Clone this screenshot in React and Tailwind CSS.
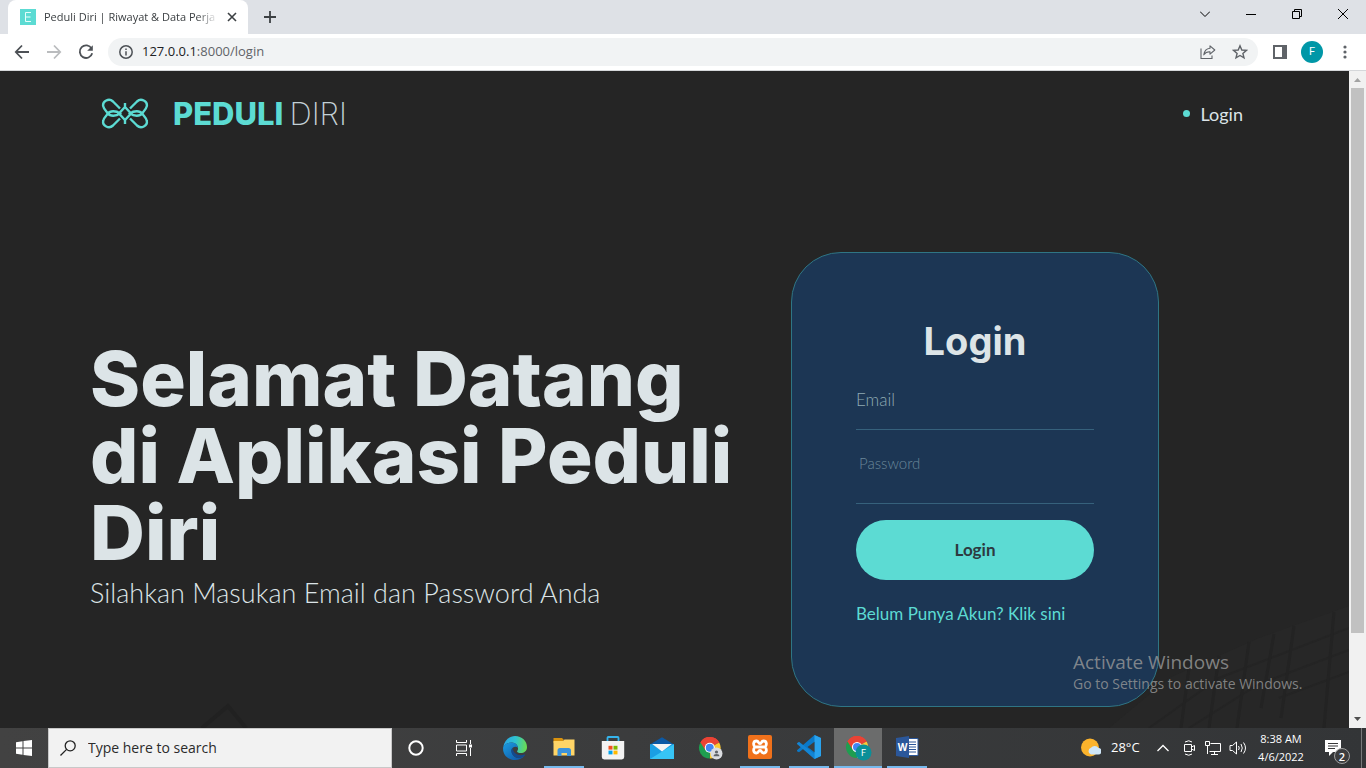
const RUNNING = 'mx-1 h-[2px] bg-[#76b9ed]'
const ACTIVE = 'h-[2px] bg-[#76b9ed]'

const CHROME_SLICES = (
  <>
    <path d="M12 12 L1.6 6 A12 12 0 0 1 22.4 6 Z" fill="#ea4335" />
    <path d="M12 12 L22.4 6 A12 12 0 0 1 12 24 Z" fill="#fbc934" />
    <path d="M12 12 L12 24 A12 12 0 0 1 1.6 6 Z" fill="#1e9e50" />
    <path d="M12 6.5 H22.7 A12 12 0 0 0 1.6 6 L7.2 14.8 Z" fill="#ea4335" />
    <circle cx="12" cy="12" r="5.6" fill="#fff" />
    <circle cx="12" cy="12" r="4.4" fill="#4285f4" />
  </>
)

function EdgeIcon() {
  return (
    <svg viewBox="0 0 24 24" className="size-6">
      <defs>
        <linearGradient id="edgeTop" x1="0" y1="0.4" x2="1" y2="0.5">
          <stop offset="0" stopColor="#2aa5e6" />
          <stop offset="0.5" stopColor="#2fc3d0" />
          <stop offset="1" stopColor="#6bdc4e" />
        </linearGradient>
        <linearGradient id="edgeLow" x1="0" y1="0" x2="1" y2="1">
          <stop offset="0" stopColor="#1b9de2" />
          <stop offset="1" stopColor="#0f4f9e" />
        </linearGradient>
      </defs>
      <path d="M.2 11 C1.5 4 6.5 0 12 0 C19 0 24 5 24 11 C24 15 21 17 17.8 17 C15 17 13.6 16 14.2 15 C16.2 12.8 14.8 7 8.8 6.6 C4.5 6.5 1.2 8.5 .2 11 Z" fill="url(#edgeTop)" />
      <path d="M.2 11 C1.4 8 4.6 6.6 8.8 6.6 C12.4 6.8 14.8 9.2 14.9 11.7 C13.8 10.6 11.8 10.2 10 11.4 C7.4 13.6 8.4 18.6 12 21 C15 22.7 18.8 21.8 22 19.2 C19.8 22.4 16 24 12 24 C4 24 -.8 17.5 .2 11 Z" fill="url(#edgeLow)" />
      <path d="M9.5 11.8 C7 14.5 8.6 19 12 21 C15 22.7 18.8 21.8 22 19.2 C22.4 18.6 22 18.2 21.4 18.5 C16 20.6 10 17.8 9.5 11.8 Z" fill="#134a8e" />
    </svg>
  )
}

function ExplorerIcon() {
  return (
    <svg viewBox="0 0 24 24" className="size-6">
      <path d="M1.5 3 H10 L11.5 4.5 V8 H1.5 Z" fill="#d9920e" />
      <path d="M1.5 6 H11 L12.5 4.6 H22.5 V20.5 H1.5 Z" fill="#ffd567" />
      <path d="M5.5 21 V15.5 Q5.5 13 8 13 H16.5 Q19 13 19 15.5 V21 H15 V18 H9.5 V21 Z" fill="#3c93db" />
    </svg>
  )
}

function StoreIcon() {
  return (
    <svg viewBox="0 0 24 24" className="size-6">
      <path d="M6.5 6 V1.8 Q6.5 1 7.3 1 H16.7 Q17.5 1 17.5 1.8 V6" fill="none" stroke="#35b4ec" strokeWidth="1.8" />
      <path d="M.8 5 H23.2 V21 Q23.2 23.4 20.8 23.4 H3.2 Q.8 23.4 .8 21 Z" fill="#f3f3f3" />
      <path d="M7.5 9.8 H11.5 V13.6 H7.5 Z" fill="#f25022" />
      <path d="M12.5 9.8 H16.5 V13.6 H12.5 Z" fill="#7fba00" />
      <path d="M7.5 14.6 H11.5 V18.4 H7.5 Z" fill="#00a4ef" />
      <path d="M12.5 14.6 H16.5 V18.4 H12.5 Z" fill="#ffb900" />
    </svg>
  )
}

function MailIcon() {
  return (
    <svg viewBox="0 0 24 24" className="size-6">
      <path d="M0 8.5 L12 1.2 L24 8.5 V10 H0 Z" fill="#0c59a4" />
      <path d="M0 8.2 V23 H24 V8.2 Z" fill="#1a9fe4" />
      <path d="M24 8.2 L0 23 H24 Z" fill="#37c4f5" />
      <path d="M2.2 8 H21.8 L12 15.5 Z" fill="#f4f4f4" />
    </svg>
  )
}

function ChromeGuestIcon() {
  return (
    <svg viewBox="0 0 26 26" className="size-[26px]">
      <g transform="translate(1 2) scale(.9)">{CHROME_SLICES}</g>
      <circle cx="18.5" cy="18.5" r="6" fill="#dadce0" />
      <circle cx="18.5" cy="17" r="1.6" fill="#5f6368" />
      <path d="M15.6 21.3 Q15.6 19 18.5 19 Q21.4 19 21.4 21.3 Z" fill="#5f6368" />
    </svg>
  )
}

function ChromeProfileIcon() {
  return (
    <svg viewBox="0 0 28 28" className="size-7">
      <g transform="translate(2 3) scale(.92)">{CHROME_SLICES}</g>
      <circle cx="19.5" cy="19.5" r="8" fill="#0b8f98" />
      <text x="19.5" y="23" textAnchor="middle" fontSize="9" fontFamily="Roboto" fill="#fff">F</text>
    </svg>
  )
}

function XamppIcon() {
  return (
    <svg viewBox="0 0 24 24" className="size-6">
      <rect width="24" height="24" rx="2" fill="#f0711b" />
      <path
        d="M8.5 6 C5 6 5 10 7 12 C5 14 5 18 8.5 18 C11 18 10 15.5 12 15.5 C14 15.5 13 18 15.5 18 C19 18 19 14 17 12 C19 10 19 6 15.5 6 C13 6 14 8.5 12 8.5 C10 8.5 11 6 8.5 6 Z M8 12 H16"
        fill="none"
        stroke="#fff"
        strokeWidth="2.8"
        strokeLinejoin="round"
      />
    </svg>
  )
}

function CodeIcon() {
  return (
    <svg viewBox="0 0 24 24" className="size-6">
      <path d="M17.5 0 L24 3 V21 L17.5 24 L6.5 13.8 L2 17.3 L0 16.2 V15.2 L17.5 0 Z" fill="#0a79c9" />
      <path d="M0 8.2 L2 6.8 L17.5 19 V24 L0 9 Z" fill="#1385d4" />
      <path d="M17.5 0 L24 3 V21 L17.5 24 V18 V6 Z" fill="#29a3ee" />
      <path d="M17.5 6.8 L10.5 12 L17.5 17.2 Z" fill="#3e3f40" />
    </svg>
  )
}

function WordIcon() {
  return (
    <svg viewBox="0 0 24 24" className="size-6">
      <path d="M12 3.5 H23 V20.5 H12 Z" fill="#fff" stroke="#2b579a" />
      <path d="M14 7 H21 M14 9.5 H21 M14 12 H21 M14 14.5 H21 M14 17 H21" stroke="#2b579a" />
      <path d="M1 3 L14 1 V23 L1 21 Z" fill="#2b579a" />
      <text x="7.5" y="16" textAnchor="middle" fontSize="10" fontWeight="700" fontFamily="Open Sans" fill="#fff">W</text>
    </svg>
  )
}

const PINNED_APPS = [
  { name: 'Microsoft Edge', icon: <EdgeIcon /> },
  { name: 'File Explorer', icon: <ExplorerIcon />, line: RUNNING },
  { name: 'Microsoft Store', icon: <StoreIcon /> },
  { name: 'Mail', icon: <MailIcon /> },
  { name: 'Chrome', icon: <ChromeGuestIcon /> },
  { name: 'XAMPP', icon: <XamppIcon />, line: RUNNING },
  { name: 'Visual Studio Code', icon: <CodeIcon />, line: RUNNING },
  { name: 'Chrome profile', icon: <ChromeProfileIcon />, line: ACTIVE, active: true },
  { name: 'Word', icon: <WordIcon />, line: RUNNING },
]

function TabStrip() {
  return (
    <div className="flex h-[34px] items-stretch bg-[#dee1e6] pl-2">
      <div className="flex w-60 items-center rounded-t-lg bg-white pr-2 pl-3">
        <svg viewBox="0 0 16 16" className="size-4 shrink-0">
          <rect width="16" height="16" fill="#5cdbd3" />
          <path d="M11 3.5 H5.5 V12.5 H11 M5.5 8 H10.5" fill="none" stroke="#e6fffb" />
        </svg>
        <span className="ml-2 flex-1 overflow-hidden text-[11px] whitespace-nowrap text-[#3c4043] [mask-image:linear-gradient(to_right,black_88%,transparent)]">
          Peduli Diri | Riwayat &amp; Data Perja
        </span>
        <button aria-label="Close tab" className="ml-1.5 grid size-4 place-items-center">
          <svg viewBox="0 0 10 10" className="size-2.5" stroke="#3c4043" strokeWidth="1.6">
            <path d="M1 1 L9 9 M9 1 L1 9" />
          </svg>
        </button>
      </div>
      <button aria-label="New tab" className="grid w-11 place-items-center">
        <svg viewBox="0 0 12 12" className="size-3" stroke="#3c4043" strokeWidth="1.8">
          <path d="M6 0 V12 M0 6 H12" />
        </svg>
      </button>
      <div className="ml-auto flex pb-1.5 text-black">
        <button aria-label="Search tabs" className="grid w-[46px] place-items-center">
          <svg viewBox="0 0 10 10" className="size-2.5" fill="none" stroke="currentColor">
            <path d="M0 2.5 L5 7.5 L10 2.5" />
          </svg>
        </button>
        <button aria-label="Minimize" className="grid w-[46px] place-items-center">
          <svg viewBox="0 0 10 10" className="size-2.5" stroke="currentColor">
            <path d="M0 5.5 H10" />
          </svg>
        </button>
        <button aria-label="Restore" className="grid w-[46px] place-items-center">
          <svg viewBox="0 0 10 10" className="size-2.5" fill="none" stroke="currentColor">
            <path d="M.5 2.5 H7.5 V9.5 H.5 Z M2.5 2.5 V.5 H9.5 V7.5 H7.5" />
          </svg>
        </button>
        <button aria-label="Close" className="grid w-[46px] place-items-center">
          <svg viewBox="0 0 10 10" className="size-2.5" stroke="currentColor">
            <path d="M0 0 L10 10 M10 0 L0 10" />
          </svg>
        </button>
      </div>
    </div>
  )
}

function Toolbar() {
  return (
    <div className="flex h-[37px] items-center border-b border-[#d5d7da] bg-white pr-[19px] pl-3.5 text-[#5f6368]">
      <button aria-label="Back" className="w-8">
        <svg viewBox="0 0 16 16" className="size-4" fill="none" stroke="#4d5156" strokeWidth="1.8">
          <path d="M15 8 H2 M8 1.5 L1.8 8 L8 14.5" />
        </svg>
      </button>
      <button aria-label="Forward" className="w-8">
        <svg viewBox="0 0 16 16" className="size-4" fill="none" stroke="#babcbe" strokeWidth="1.8">
          <path d="M1 8 H14 M8 1.5 L14.2 8 L8 14.5" />
        </svg>
      </button>
      <button aria-label="Reload" className="w-[30px]">
        <svg viewBox="0 0 16 16" className="size-4" fill="none" stroke="#4d5156" strokeWidth="1.8">
          <path d="M13.6 4.6 A6.3 6.3 0 1 0 14.2 9.3" />
          <path d="M14.8 1.2 V6.8 H9.2 Z" fill="#4d5156" stroke="none" />
        </svg>
      </button>
      <div className="flex h-7 flex-1 items-center rounded-full bg-[#f1f3f4] px-2.5">
        <svg viewBox="0 0 16 16" className="mr-2 size-4 shrink-0" fill="none" stroke="#4d5156" strokeWidth="1.5">
          <circle cx="8" cy="8" r="6.2" />
          <path d="M8 7.2 V11.4 M8 4.6 V6.1" />
        </svg>
        <span className="text-[13px] text-[#5f6368]">
          <span className="text-[#202124]">127.0.0.1</span>:8000/login
        </span>
        <button aria-label="Share" className="ml-auto">
          <svg viewBox="0 0 16 16" className="size-4" fill="none" stroke="currentColor" strokeWidth="1.1">
            <path d="M1 4.5 V14.5 H12 V11.5" />
            <path d="M10 1.8 L14.8 6 L10 10.2 V7.8 Q6 7.6 3.8 10.8 Q4.6 5 10 4.3 Z" strokeLinejoin="round" />
          </svg>
        </button>
        <button aria-label="Bookmark" className="ml-4">
          <svg viewBox="0 0 16 16" className="size-4" fill="none" stroke="currentColor" strokeWidth="1.4">
            <path d="M8 1.8 L9.8 6 L14.4 6.4 L10.9 9.4 L12 13.9 L8 11.5 L4 13.9 L5.1 9.4 L1.6 6.4 L6.2 6 Z" />
          </svg>
        </button>
      </div>
      <button aria-label="Side panel" className="ml-[15px]">
        <svg viewBox="0 0 14 14" className="size-3.5">
          <path d="M0 0 H14 V14 H0 Z M2 2 V12 H9 V2 Z" fill="currentColor" fillRule="evenodd" />
        </svg>
      </button>
      <button aria-label="Profile" className="ml-3.5 grid size-[22px] place-items-center rounded-full bg-[#0097a7] font-[Roboto] text-[11px] text-white">
        F
      </button>
      <button aria-label="Menu" className="ml-5">
        <svg viewBox="0 0 4 14" className="h-3.5 w-1" fill="currentColor">
          <circle cx="2" cy="2" r="1.6" />
          <circle cx="2" cy="7" r="1.6" />
          <circle cx="2" cy="12" r="1.6" />
        </svg>
      </button>
    </div>
  )
}

function BrandLogo() {
  return (
    <svg viewBox="0 0 48 32" className="h-8 w-12" fill="none" stroke="#5cdbd3" strokeWidth="2.4">
      <path d="M19 10.5 L12 3.5 C8 -.2 1.2 3 2.2 8.2 C2.6 11 5 13 7 15.5 M29 10.5 L36 3.5 C40 -.2 46.8 3 45.8 8.2 C45.4 11 43 13 41 15.5" />
      <path d="M19 20.5 L12 27.5 C8 31.2 1.2 28 2.2 22.8 C2.6 20 5 18 7 15.5 M29 20.5 L36 27.5 C40 31.2 46.8 28 45.8 22.8 C45.4 20 43 18 41 15.5" />
      <path d="M7 15.5 C9 12.5 15 12.5 19 15.5 C15 18.5 9 18.5 7 15.5 Z M41 15.5 C39 12.5 33 12.5 29 15.5 C33 18.5 39 18.5 41 15.5 Z" />
      <path d="M24 9 L30 15.5 L24 22 L18 15.5 Z M24 5 V10 M24 21 V26" />
    </svg>
  )
}

// Faint towers behind the hero
function Backdrop() {
  return (
    <>
      <svg viewBox="0 0 280 140" className="pointer-events-none absolute right-0 bottom-0 w-70" fill="none">
        <path d="M280 18 L190 50 L100 90 L40 140 H280 Z" fill="#272727" />
        <path d="M280 40 L150 90 L80 140 M280 62 L190 96 L120 140 M280 84 L210 110" stroke="#242424" strokeWidth="2" />
        <path d="M265 24 L255 140 M225 38 L212 130 M205 46 L192 120 M180 54 L168 140 M150 68 L140 140 M120 80 L112 140" stroke="#232323" strokeWidth="3" />
      </svg>
      <svg viewBox="0 0 56 26" className="pointer-events-none absolute bottom-0 left-[200px] w-14" fill="none">
        <path d="M2 26 L28 4 L46 26" stroke="#212121" strokeWidth="4" />
      </svg>
    </>
  )
}

function LoginCard() {
  return (
    <form className="flex w-[368px] shrink-0 flex-col rounded-[50px] border border-[#2f7584] bg-[#1c3654] px-16 pt-16 pb-20">
      <h2 className="mb-[5px] text-center font-[Inter,sans-serif] text-[38px] leading-12 font-bold text-[#dce4e7]">Login</h2>
      <input
        type="email"
        aria-label="Email"
        placeholder="Email"
        className="h-[60px] w-full border-b border-[#36617c] bg-transparent text-[17px] font-light outline-none placeholder:text-[#8fabb3]"
      />
      <input
        type="password"
        aria-label="Password"
        placeholder="Password"
        className="h-[74px] w-full border-b border-[#36617c] bg-transparent px-[3px] pb-2 text-[15px] font-light outline-none placeholder:text-[#6a8799]"
      />
      <button type="button" className="mt-4 h-[60px] rounded-full bg-[#5cdbd3] text-[17px] font-bold text-[#2d3a40]">
        Login
      </button>
      <a href="#register" className="mt-[22px] text-[17px] leading-6 whitespace-nowrap text-[#5cdbd3]">
        Belum Punya Akun? Klik sini
      </a>
    </form>
  )
}

function PageScrollbar() {
  return (
    <div className="flex w-[17px] shrink-0 flex-col items-center bg-[#f1f1f1]">
      <svg viewBox="0 0 17 17" className="size-[17px] shrink-0">
        <path d="M5 11 L8.5 7 L12 11 Z" fill="#a3a3a3" />
      </svg>
      <div className="w-[13px] flex-[7] bg-[#c1c1c1]" />
      <div className="flex-1" />
      <svg viewBox="0 0 17 17" className="size-[17px] shrink-0">
        <path d="M5 6 L8.5 10 L12 6 Z" fill="#505050" />
      </svg>
    </div>
  )
}

function Page() {
  return (
    <div className="relative flex flex-1">
      <div className="relative flex-1 overflow-hidden bg-[#252525] px-[90px] font-[Lato,sans-serif]">
        <Backdrop />
        <header className="relative flex h-[85px] items-center pr-4 pl-[11px]">
          <BrandLogo />
          <div className="ml-6 flex items-baseline gap-1.5 font-[Inter,sans-serif] text-[31px] leading-none">
            <span className="font-extrabold text-[#5cdbd3]">PEDULI</span>
            <span className="font-extralight text-[#c3d0d6]">DIRI</span>
          </div>
          <nav className="ml-auto flex items-center gap-[11px]">
            <span className="size-[7px] rounded-full bg-[#5cdbd3]" />
            <a href="#login" className="text-lg text-[#dce4e7]">Login</a>
          </nav>
        </header>
        <main className="relative flex items-center justify-between pt-24 pr-[100px]">
          <div className="w-[660px] pb-2 text-[#dce4e7]">
            <h1 className="font-[Inter,sans-serif] text-[76px] leading-[77px] font-extrabold">
              Selamat Datang di Aplikasi Peduli Diri
            </h1>
            <p className="mt-1 text-[27px] leading-9 font-light">Silahkan Masukan Email dan Password Anda</p>
          </div>
          <LoginCard />
        </main>
      </div>
      <PageScrollbar />
      <div className="pointer-events-none absolute right-[57px] bottom-[34px] w-[236px] whitespace-nowrap text-[#9a9a9a]/80">
        <p className="text-[19px] leading-6">Activate Windows</p>
        <p className="text-sm leading-5">Go to Settings to activate Windows.</p>
      </div>
    </div>
  )
}

function Taskbar() {
  return (
    <footer className="flex h-10 shrink-0 items-stretch bg-gradient-to-r from-[#424242] to-[#333537] text-white">
      <button aria-label="Start" className="grid w-12 place-items-center">
        <svg viewBox="0 0 16 16" className="size-4" fill="#fff">
          <path d="M0 2.2 L6.5 1.3 V7.5 H0 Z M7.5 1.1 L16 0 V7.5 H7.5 Z M0 8.5 H6.5 V14.7 L0 13.8 Z M7.5 8.5 H16 V16 L7.5 14.9 Z" />
        </svg>
      </button>
      <label className="flex w-[344px] items-center gap-3 border border-[#c8c8c8] bg-[#f2f2f2] px-[11px]">
        <svg viewBox="0 0 16 16" className="size-4 shrink-0" fill="none" stroke="#222" strokeWidth="1.3">
          <circle cx="10.2" cy="5.8" r="5" />
          <path d="M6.6 9.4 L.5 15.5" />
        </svg>
        <input aria-label="Search" placeholder="Type here to search" className="min-w-0 flex-1 bg-transparent text-sm outline-none placeholder:text-[#2b2b2b]" />
      </label>
      <button aria-label="Cortana" className="grid w-12 place-items-center">
        <svg viewBox="0 0 16 16" className="size-4" fill="none" stroke="#fff" strokeWidth="2">
          <circle cx="8" cy="8" r="6.7" />
        </svg>
      </button>
      <button aria-label="Task view" className="grid w-12 place-items-center">
        <svg viewBox="0 0 16 16" className="size-4" fill="none" stroke="#fff">
          <path d="M.5 0 V2.5 H10.5 V0 M.5 16 V13.5 H10.5 V16 M.5 5 H10.5 V11 H.5 Z M14.5 0 V4 M14.5 8 V16" />
          <path d="M13 4.5 H16 V7.5 H13 Z" fill="#fff" stroke="none" />
        </svg>
      </button>
      <div className="ml-[3px] flex gap-px">
        {PINNED_APPS.map((app) => (
          <button
            key={app.name}
            aria-label={app.name}
            className={app.active ? 'flex w-12 flex-col bg-[#6b6c6c]' : 'flex w-12 flex-col'}
          >
            <span className="grid flex-1 place-items-center self-stretch">{app.icon}</span>
            {app.line && <span className={`self-stretch ${app.line}`} />}
          </button>
        ))}
      </div>
      <div className="ml-auto flex items-center">
        <svg viewBox="0 0 20 20" className="size-5">
          <circle cx="9" cy="9.5" r="9" fill="#fbb32c" />
          <path d="M10 16.5 A3.5 3.5 0 0 1 10 9.8 A4.5 4.5 0 0 1 17.5 10 A3.2 3.2 0 0 1 17 16.5 Z" fill="#cfe6f8" />
        </svg>
        <span className="ml-2.5 w-8 text-[13px]">28°C</span>
        <button aria-label="Hidden icons" className="ml-3.5">
          <svg viewBox="0 0 12 8" className="h-2 w-3" fill="none" stroke="#fff" strokeWidth="1.3">
            <path d="M.5 7 L6 1.5 L11.5 7" />
          </svg>
        </button>
        <svg viewBox="0 0 16 16" className="ml-3 size-4" fill="none" stroke="#fff">
          <path d="M3.5 4.5 H10.5 V11.5 H3.5 Z M10.5 7 L13.5 5.5 V10.5 L10.5 9 M4 2 Q8 -.5 11 2 M4 14 Q8 16.5 11 14" />
        </svg>
        <svg viewBox="0 0 16 16" className="ml-2 size-4" fill="none" stroke="#fff">
          <path d="M5.5 3.5 H15.5 V11.5 H4.5 M9.5 11.5 V14 M6 14.5 H13 M.5 1.5 H4.5 V5.5 H.5 Z M2.5 5.5 V14" />
        </svg>
        <svg viewBox="0 0 18 16" className="ml-2 h-4 w-[18px]" fill="none" stroke="#fff">
          <path d="M1 5.5 H3.5 L7.5 2 V14 L3.5 10.5 H1 Z M9.5 6 Q11 8 9.5 10 M12 4 Q14.5 8 12 12 M14.5 2.5 Q18.5 8 14.5 13.5" />
        </svg>
        <div className="ml-1.5 w-14 text-center text-[11px] leading-[18px] whitespace-nowrap">
          <div>8:38 AM</div>
          <div>4/6/2022</div>
        </div>
        <button aria-label="Notifications" className="relative ml-3 grid h-10 w-6 place-items-center">
          <svg viewBox="0 0 16 16" className="size-4">
            <path d="M0 0 H16 V12 H8 L4 16 V12 H0 Z" fill="#fff" />
            <path d="M3 3.5 H13 M3 6 H13 M3 8.5 H10" stroke="#38393a" />
          </svg>
          <span className="absolute right-[-5px] bottom-1 grid size-4 place-items-center rounded-full border border-[#a0a0a0] bg-[#3c3d3e] text-[11px] leading-none font-semibold">
            2
          </span>
        </button>
        <span className="ml-4 h-10 w-[5px] border-l border-[#77797a]" />
      </div>
    </footer>
  )
}

export default function App() {
  return (
    <div className="flex min-h-screen flex-col font-['Open_Sans',sans-serif]">
      <TabStrip />
      <Toolbar />
      <Page />
      <Taskbar />
    </div>
  )
}
